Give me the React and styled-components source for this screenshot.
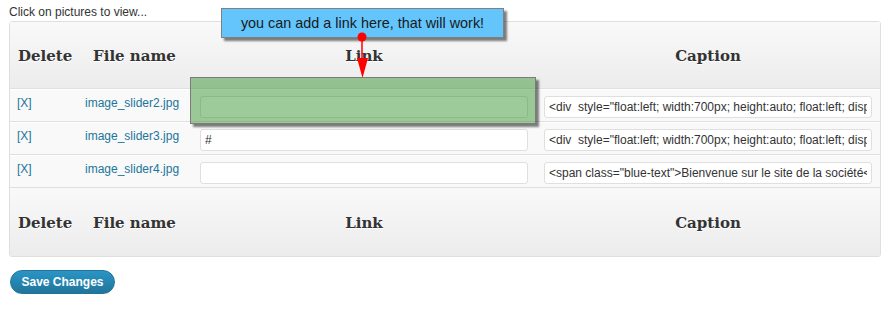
import styled, { createGlobalStyle } from "styled-components";

const GlobalStyle = createGlobalStyle`
  body {
    margin: 0;
    background: #fff;
    font-family: "Liberation Sans", Arial, sans-serif;
    color: #333;
  }
`;

const Page = styled.div`
  position: relative;
  width: 896px;
  height: 313px;
  padding: 5px 0 0 9px;
  box-sizing: border-box;
`;

const Intro = styled.div`
  font-size: 12px;
  line-height: 14px;
  margin-bottom: 2px;
`;

const Table = styled.table`
  width: 872px;
  table-layout: fixed;
  border-collapse: separate;
  border-spacing: 0;
  border: 1px solid #dfdfdf;
  border-radius: 3px;
  background: #f9f9f9;
`;

const HeadCell = styled.th`
  box-sizing: border-box;
  width: ${(p) => p.$w}px;
  height: ${(p) => (p.$foot ? 68 : 67)}px;
  padding: 2px 8px 0;
  text-align: center;
  vertical-align: middle;
  font-family: "DejaVu Serif", "Liberation Serif", Georgia, serif;
  font-size: 15px;
  font-weight: bold;
  color: #333;
  text-shadow: 0 1px 0 #fff;
  background: linear-gradient(to bottom, #f9f9f9, #ececec);
  border-bottom: ${(p) => (p.$foot ? "none" : "1px solid #dfdfdf")};
`;

const Cell = styled.td`
  box-sizing: border-box;
  padding: 6px 8px 3px;
  padding-left: ${(p) => p.$pl || 8}px;
  vertical-align: top;
  border-top: 1px solid #fff;
  border-bottom: 1px solid #dfdfdf;
  font-size: 12px;
  line-height: 14px;
`;

const FileLink = styled.a`
  color: #21759b;
  text-decoration: none;
  cursor: pointer;
`;

const TextInput = styled.input`
  display: block;
  box-sizing: border-box;
  width: 328px;
  height: 22px;
  margin: 0;
  padding: 0 4px;
  border: 1px solid #dfdfdf;
  border-radius: 3px;
  background: #fff;
  font-family: "Liberation Sans", Arial, sans-serif;
  font-size: 12px;
  color: #333;
  outline: none;
`;

const SaveButton = styled.button`
  display: block;
  margin: 13px 0 0 1px;
  width: 105px;
  height: 24px;
  padding: 0;
  border: 1px solid #21759b;
  border-radius: 12px;
  background: linear-gradient(to bottom, #2a95c5, #21759b);
  color: #fff;
  font-family: "Liberation Sans", Arial, sans-serif;
  font-size: 12px;
  font-weight: bold;
  cursor: pointer;
`;

const Callout = styled.div`
  position: absolute;
  left: 221px;
  top: 8px;
  width: 283px;
  height: 30px;
  box-sizing: border-box;
  background: #63c5fc;
  border: 1px solid #808080;
  box-shadow: 3px 3px 2px rgba(0, 0, 0, 0.5);
  font-size: 14.4px;
  line-height: 28px;
  text-align: center;
  color: #1a1a1a;
`;

const Highlight = styled.div`
  position: absolute;
  left: 190px;
  top: 77px;
  width: 346px;
  height: 47px;
  box-sizing: border-box;
  background: rgba(40, 140, 30, 0.45);
  border: 1px solid #7b7b7b;
  box-shadow: 3px 3px 2px rgba(0, 0, 0, 0.5);
`;

const Pin = styled.svg`
  position: absolute;
  left: 355px;
  top: 30px;
`;

const columns = [
  { label: "Delete", w: 67 },
  { label: "File name", w: 115 },
  { label: "Link", w: 344 },
  { label: "Caption", w: 344 },
];

const divCaption =
  '<div  style="float:left; width:700px; height:auto; float:left; display:block;">';

const rows = [
  { file: "image_slider2.jpg", link: "", caption: divCaption },
  { file: "image_slider3.jpg", link: "#", caption: divCaption },
  {
    file: "image_slider4.jpg",
    link: "",
    caption: '<span class="blue-text">Bienvenue sur le site de la société</span>',
  },
];

function HeaderRow({ foot }) {
  return (
    <tr>
      {columns.map((c) => (
        <HeadCell key={c.label} $w={c.w} $foot={foot}>
          {c.label}
        </HeadCell>
      ))}
    </tr>
  );
}

export default function App() {
  return (
    <>
      <GlobalStyle />
      <Page>
        <Intro>Click on pictures to view...</Intro>
        <Table>
          <thead>
            <HeaderRow />
          </thead>
          <tbody>
            {rows.map((r) => (
              <tr key={r.file}>
                <Cell $pl={7}>
                  <FileLink>[X]</FileLink>
                </Cell>
                <Cell>
                  <FileLink>{r.file}</FileLink>
                </Cell>
                <Cell>
                  <TextInput type="text" defaultValue={r.link} />
                </Cell>
                <Cell>
                  <TextInput type="text" defaultValue={r.caption} />
                </Cell>
              </tr>
            ))}
          </tbody>
          <tfoot>
            <HeaderRow foot />
          </tfoot>
        </Table>
        <SaveButton>Save Changes</SaveButton>

        <Highlight />
        <Callout>you can add a link here, that will work!</Callout>
        <Pin width="15" height="50" viewBox="0 0 15 50">
          <line x1="7" y1="7" x2="7" y2="30" stroke="#ff0000" strokeWidth="1.5" />
          <polygon points="2,28 13,28 7.5,48" fill="#ff0000" />
          <circle cx="7" cy="7" r="4.5" fill="#ff0000" />
        </Pin>
      </Page>
    </>
  );
}
